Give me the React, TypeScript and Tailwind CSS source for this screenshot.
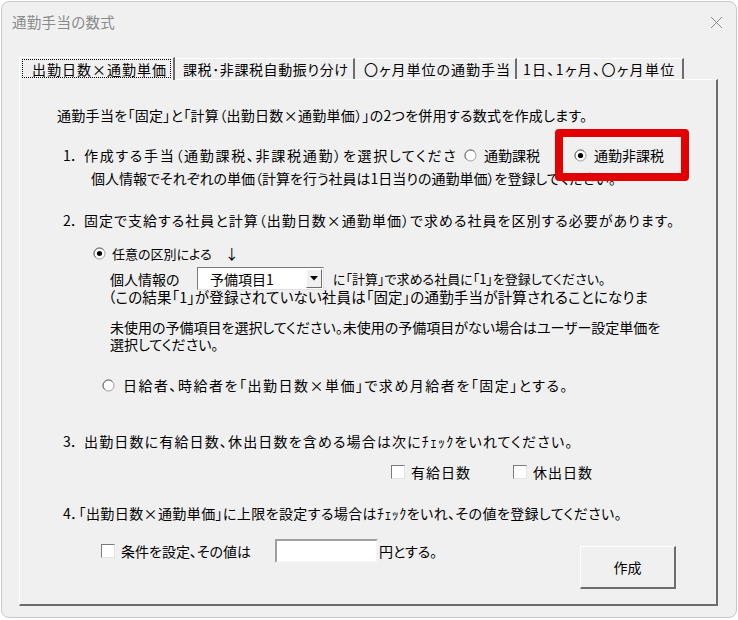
import React from "react";

const Radio = ({ checked = false }: { checked?: boolean }) => (
  <svg width="13" height="13" viewBox="0 0 13 13" className="shrink-0">
    <circle cx="6.5" cy="6.5" r="5.5" fill="#fff" stroke="#9a9a9a" />
    <path d="M2.6 10.4 A5.5 5.5 0 0 1 10.4 2.6" fill="none" stroke="#6e6e6e" />
    {checked && <circle cx="6.5" cy="6.5" r="2.6" fill="#000" />}
  </svg>
);

const Check = () => (
  <span className="block w-[14px] h-[14px] shrink-0 bg-white border border-t-[#7a7a7a] border-l-[#7a7a7a] border-r-[#e2e2e2] border-b-[#e2e2e2]" />
);

export default function App() {
  return (
    <div className="w-[738px] h-[620px] bg-white pt-[1px] pl-[1px] font-['Noto_Sans_CJK_JP',sans-serif] [font-feature-settings:'palt'] text-black text-[14px] leading-none">
      <div className="w-[736px] h-[617px] rounded-[8px] border border-[#c9c9c9] bg-[#f0f0f0] overflow-hidden">
        {/* title bar */}
        <div className="h-[40px] flex items-center justify-between pl-[10px] pr-[13px]">
          <span className="text-[14.5px] text-[#8a8a8a] tracking-[0.3px]">通勤手当の数式</span>
          <svg width="13" height="13" viewBox="0 0 13 13">
            <path d="M1 1 L12 12 M12 1 L1 12" stroke="#8a8a8a" strokeWidth="1" />
          </svg>
        </div>

        <div className="ml-[17px] mt-[15px] w-[699px]">
          {/* tabs */}
          <div className="flex h-[22px] items-end">
            <div className="w-[156px] border-t border-l border-white border-r-2 border-r-[#6d6d6d] px-[2px] pt-[1px] relative z-10 bg-[#f0f0f0] -mb-[1px] h-[23px]">
              <div className="h-[19px] border border-dotted border-black flex items-center pl-[9px] tracking-[1px]">
                出勤日数×通勤単価
              </div>
            </div>
            <div className="w-[180px] h-[21px] border-t border-white border-r-2 border-r-[#6d6d6d] flex items-center pl-[8px] tracking-[0.6px]">
              課税･非課税自動振り分け
            </div>
            <div className="w-[162px] h-[21px] border-t border-white border-r-2 border-r-[#6d6d6d] flex items-center pl-[9px] tracking-[1px]">
              〇ヶ月単位の通勤手当
            </div>
            <div className="w-[167px] h-[21px] border-t border-white border-r-2 border-r-[#6d6d6d] flex items-center pl-[6px] tracking-[1.35px]">
              1日、1ヶ月、〇ヶ月単位
            </div>
          </div>

          {/* panel */}
          <div className="h-[527px] border-t border-l border-white border-r-2 border-b-2 border-r-[#6d6d6d] border-b-[#6d6d6d] flex flex-col">
            <div className="mt-[25px] h-[20px] flex items-center pl-[37px] tracking-[0.3px]">
              通勤手当を「固定」と「計算（出勤日数×通勤単価）」の2つを併用する数式を作成します。
            </div>

            <div className="mt-[20px] h-[20px] flex items-center pl-[43px] relative">
              <span className="w-[21px] shrink-0">1．</span>
              <span className="w-[380px] shrink-0 whitespace-nowrap tracking-[1.7px]">作成する手当（通勤課税、非課税通勤）を選択してくださ</span>
              <Radio />
              <span className="ml-[7px] w-[90px] shrink-0">通勤課税</span>
              <Radio checked />
              <span className="ml-[7px]">通勤非課税</span>
              <div className="absolute left-[535px] top-[-16px] w-[134px] h-[52px] border-[8px] border-[#e30000] rounded-[4px]" />
            </div>

            <div className="mt-[3px] h-[20px] flex items-center pl-[71px]">
              個人情報でそれぞれの単価（計算を行う社員は1日当りの通勤単価）を登録してください。
            </div>

            <div className="mt-[22px] h-[20px] flex items-center pl-[43px]">
              <span className="w-[21px] shrink-0">2．</span>
              <span className="tracking-[1.02px]">固定で支給する社員と計算（出勤日数×通勤単価）で求める社員を区別する必要があります。</span>
            </div>

            <div className="mt-[13px] h-[20px] flex items-center pl-[73px]">
              <Radio checked />
              <span className="ml-[6px] text-[13px]">任意の区別による</span>
              <span className="ml-[13px]">↓</span>
            </div>

            <div className="mt-[4px] h-[23px] flex items-center pl-[90px]">
              <span className="w-[87px] shrink-0">個人情報の</span>
              <div className="w-[127px] h-[23px] shrink-0 bg-white border border-t-[#7a7a7a] border-l-[#7a7a7a] border-r-[#e2e2e2] border-b-[#e2e2e2] flex items-center">
                <span className="flex-1 pl-[12px]">予備項目1</span>
                <div className="w-[16px] h-[19px] mr-[1px] bg-[#f0f0f0] border border-t-white border-l-white border-r-[#6d6d6d] border-b-[#6d6d6d] flex items-center justify-center">
                  <svg width="8" height="5" viewBox="0 0 8 5">
                    <path d="M0 0 H8 L4 4.5 Z" fill="#000" />
                  </svg>
                </div>
              </div>
              <span className="ml-[9px] text-[13px]">に「計算」で求める社員に「1」を登録してください。</span>
            </div>

            <div className="mt-[-1px] h-[16px] flex items-center pl-[88px] text-[14.5px] tracking-[0.2px]">
              （この結果「1」が登録されていない社員は「固定」の通勤手当が計算されることになりま
            </div>

            <div className="mt-[14px] h-[16px] flex items-center pl-[90px]">
              未使用の予備項目を選択してください。未使用の予備項目がない場合はユーザー設定単価を
            </div>
            <div className="mt-[1px] h-[16px] flex items-center pl-[90px]">
              選択してください。
            </div>

            <div className="mt-[23px] h-[20px] flex items-center pl-[82px]">
              <Radio />
              <span className="ml-[8px] tracking-[1.5px]">日給者、時給者を「出勤日数×単価」で求め月給者を「固定」とする。</span>
            </div>

            <div className="mt-[36px] h-[20px] flex items-center pl-[43px]">
              <span className="w-[21px] shrink-0">3．</span>
              <span className="tracking-[1.15px]">出勤日数に有給日数、休出日数を含める場合は次にﾁｪｯｸをいれてください。</span>
            </div>

            <div className="mt-[11px] h-[20px] flex items-center pl-[371px]">
              <Check />
              <span className="ml-[6px] w-[102px] shrink-0 tracking-[1px]">有給日数</span>
              <Check />
              <span className="ml-[6px] tracking-[1px]">休出日数</span>
            </div>

            <div className="mt-[21px] h-[20px] flex items-center pl-[43px] tracking-[0.4px]">
              4．「出勤日数×通勤単価」に上限を設定する場合はﾁｪｯｸをいれ、その値を登録してください。
            </div>

            <div className="mt-[16px] h-[50px] flex items-start pl-[81px]">
              <div className="mt-[5px] h-[14px] flex items-center">
                <Check />
                <span className="ml-[6px] w-[154px] shrink-0">条件を設定、その値は</span>
              </div>
              <div className="w-[103px] h-[24px] shrink-0 bg-white border-2 border-t-[#a0a0a0] border-l-[#a0a0a0] border-r-[#f4f4f4] border-b-[#f4f4f4]" />
              <span className="mt-[5px] ml-[1px] w-[201px] shrink-0">円とする。</span>
              <div className="mt-[7px] w-[96px] h-[43px] shrink-0 border border-t-white border-l-white border-r-2 border-b-2 border-r-[#6d6d6d] border-b-[#6d6d6d] flex items-center justify-center">
                作成
              </div>
            </div>
          </div>
        </div>
      </div>
    </div>
  );
}
